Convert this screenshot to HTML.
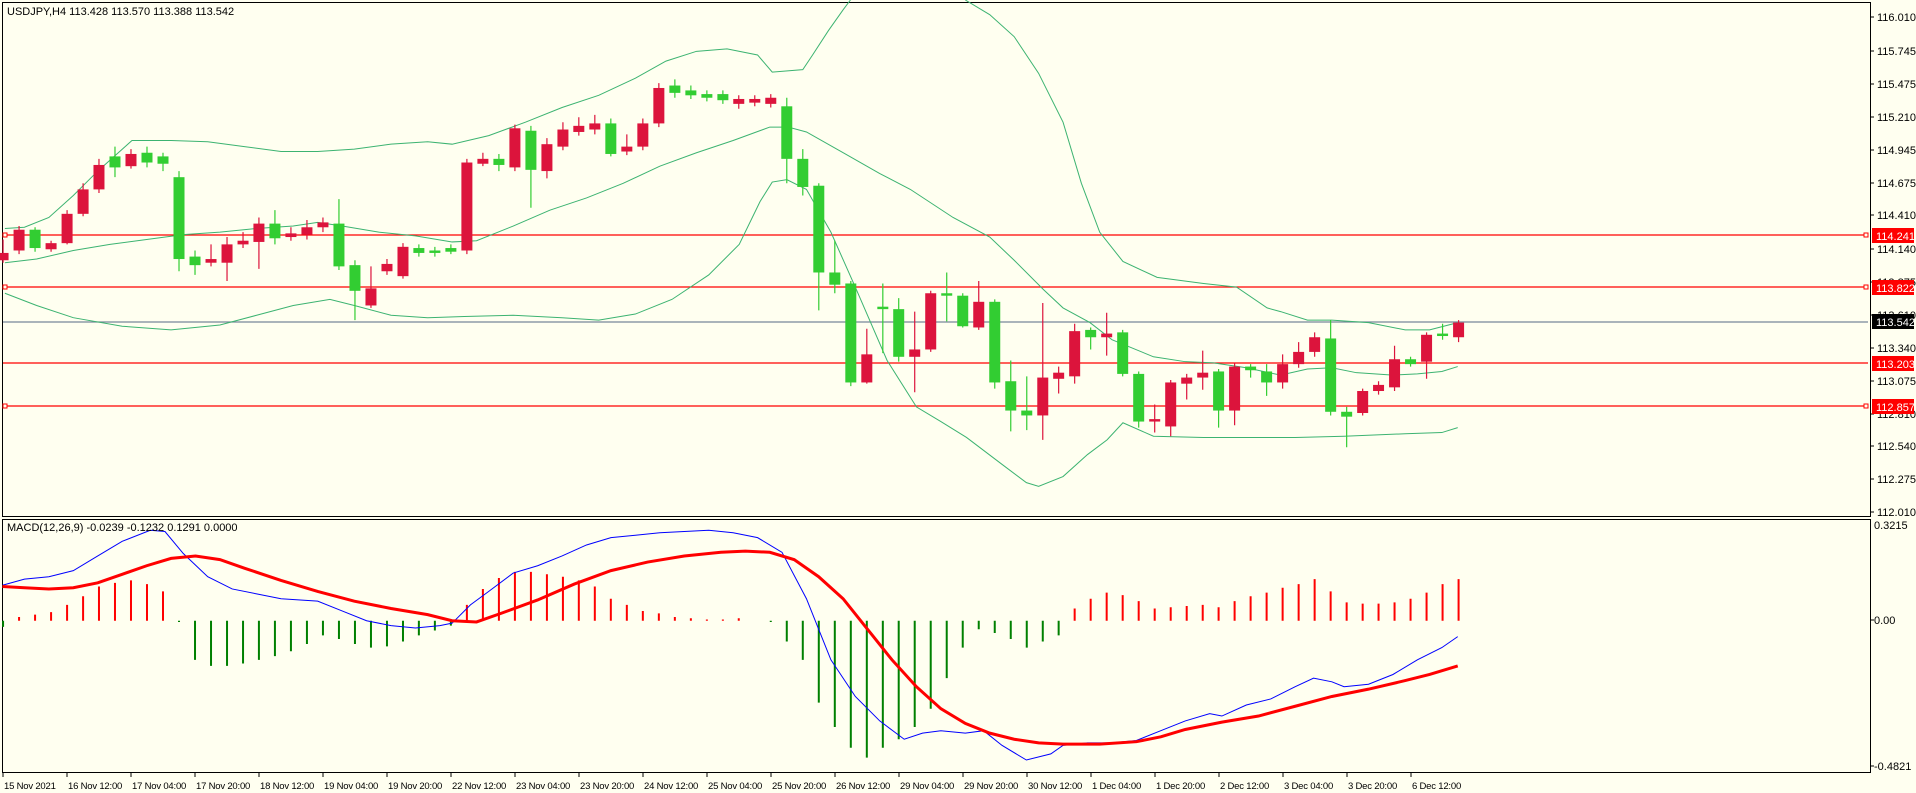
<!DOCTYPE html>
<html><head><meta charset="utf-8"><style>
html,body{margin:0;padding:0;background:#FFFFF0;}
svg{display:block;font-family:"Liberation Sans",sans-serif;}
</style></head><body>
<svg width="1916" height="793" viewBox="0 0 1916 793" xmlns="http://www.w3.org/2000/svg">
<rect width="1916" height="793" fill="#FFFFF0"/>
<path d="M2.5 2.5H1870.5V516.5H2.5Z M2.5 519.5H1870.5V772.5H2.5Z" fill="none" stroke="#000" stroke-width="1"/>
<g stroke="#FF0000" stroke-width="1.3">
<path d="M3 235H1868M3 287H1868M3 363H1868M3 406H1868"/>
</g>
<path d="M3 322H1868" stroke="#778899" stroke-width="1.2"/>
<g fill="#FFFFF0" stroke="#FF0000" stroke-width="1">
<rect x="3" y="233" width="4" height="4"/><rect x="3" y="285" width="4" height="4"/><rect x="3" y="404" width="4" height="4"/>
<rect x="1864" y="233" width="4" height="4"/><rect x="1864" y="285" width="4" height="4"/><rect x="1864" y="404" width="4" height="4"/>
</g>

<g transform="scale(1.2219)">
<g fill="none" stroke="#3CB371" stroke-width="1" vector-effect="non-scaling-stroke">
<polyline vector-effect="non-scaling-stroke" points="4,187 20,186 40,178 60,160 80,140 108,115 140,115 170,116 200,120 230,124 260,124 290,122 320,118 350,116 370,118 400,111 430,100 460,88 490,78 520,64 545,50 570,42 595,40 620,45 632,59 657,57 665,45 678,25 690,8 696,0"/>
<polyline vector-effect="non-scaling-stroke" points="790,0 810,12 830,30 850,60 870,100 885,150 900,190 919,214 947,227 985,232 1012,235 1037,252 1048,255 1070,262 1090,262 1120,264 1150,270 1170,270 1193,264"/>
<polyline vector-effect="non-scaling-stroke" points="4,215 30,212 60,205 90,200 120,196 150,192 180,190 210,187 240,185 260,182 280,185 310,190 340,193 370,198 390,197 420,185 450,172 480,162 510,150 540,136 570,125 600,115 630,104 645,104 660,108 690,125 720,142 745,155 780,178 810,194 830,213 854,237 870,252 892,264 910,278 944,292 970,296 993,297 1020,301 1048,307 1070,302 1090,301 1110,305 1140,307 1160,306 1180,304 1193,300"/>
<polyline vector-effect="non-scaling-stroke" points="4,240 30,250 60,260 100,267 140,270 180,266 210,258 240,250 270,245 290,250 320,258 350,260 380,259 420,258 460,260 490,262 520,257 550,245 580,225 605,200 622,165 632,149 644,147 660,155 680,190 700,235 726,295 750,333 770,345 791,358 820,380 840,395 850,398 870,390 890,372 906,360 919,346 944,357 985,358 1037,358 1060,358 1100,357 1150,355 1180,354 1193,350"/>
</g>
<path fill="none" stroke="#DC143C" stroke-width="1.2" vector-effect="non-scaling-stroke" d="M2.5 196V215M15.6 185V208M41.8 197V206M54.9 172V200M68 150V177M81 130V158M107.2 122V138M172.7 200V218M185.8 194V230M198.9 190V203M211.9 178V220M238.1 186V197M251.2 180V196M264.3 178V190M303.6 218V252M316.7 212V225M329.8 199V228M382.1 130V208M395.2 125V136M421.4 102V140M447.6 113V146M460.7 100V123M473.7 96V111M486.8 94V110M513 110V127M526.1 97V123M539.2 68V104M604.6 78V89M617.7 78V87M630.8 77V88M709.4 269V314M748.6 255V321M761.7 238V288M801 230V270M853.4 248V360M866.4 300V322M879.5 265V314M905.7 256V291M945 331V354M958.1 311V357M971.2 306V327M984.3 287V319M1010.4 297V348M1049.7 290V318M1062.8 280V301M1075.9 272V292M1115.2 318V340M1128.2 312V323M1141.3 283V320M1167.5 272V310M1193.7 262V280"/>
<g fill="#DC143C">
<rect x="-2" y="207" width="9" height="6"/><rect x="11.1" y="188" width="9" height="17"/><rect x="37.3" y="199" width="9" height="5"/><rect x="50.4" y="175" width="9" height="24"/><rect x="63.5" y="155" width="9" height="20"/><rect x="76.5" y="135" width="9" height="20"/><rect x="102.7" y="126" width="9" height="10"/><rect x="168.2" y="212" width="9" height="3"/><rect x="181.3" y="200" width="9" height="15"/><rect x="194.4" y="197" width="9" height="3"/><rect x="207.4" y="183" width="9" height="15"/><rect x="233.6" y="191" width="9" height="3"/><rect x="246.7" y="186" width="9" height="6"/><rect x="259.8" y="182" width="9" height="4"/><rect x="299.1" y="236" width="9" height="14"/><rect x="312.2" y="216" width="9" height="6"/><rect x="325.3" y="202" width="9" height="24"/><rect x="377.6" y="133" width="9" height="72"/><rect x="390.7" y="130" width="9" height="4"/><rect x="416.9" y="105" width="9" height="32"/><rect x="443.1" y="118" width="9" height="22"/><rect x="456.2" y="106" width="9" height="14"/><rect x="469.2" y="103" width="9" height="5"/><rect x="482.3" y="101" width="9" height="5"/><rect x="508.5" y="120" width="9" height="4"/><rect x="521.6" y="101" width="9" height="19"/><rect x="534.7" y="72" width="9" height="29"/><rect x="600.1" y="81" width="9" height="4"/><rect x="613.2" y="81" width="9" height="3"/><rect x="626.3" y="80" width="9" height="5"/><rect x="704.9" y="290" width="9" height="23"/><rect x="744.1" y="286" width="9" height="6"/><rect x="757.2" y="240" width="9" height="46"/><rect x="796.5" y="247" width="9" height="21"/><rect x="848.9" y="309" width="9" height="31"/><rect x="861.9" y="305" width="9" height="5"/><rect x="875" y="271" width="9" height="37"/><rect x="901.2" y="273" width="9" height="3"/><rect x="940.5" y="343" width="9" height="2"/><rect x="953.6" y="313" width="9" height="36"/><rect x="966.7" y="309" width="9" height="5"/><rect x="979.8" y="305" width="9" height="4"/><rect x="1005.9" y="300" width="9" height="36"/><rect x="1045.2" y="298" width="9" height="15"/><rect x="1058.3" y="288" width="9" height="10"/><rect x="1071.4" y="276" width="9" height="12"/><rect x="1110.7" y="320" width="9" height="18"/><rect x="1123.7" y="315" width="9" height="5"/><rect x="1136.8" y="294" width="9" height="23"/><rect x="1163" y="274" width="9" height="22"/><rect x="1189.2" y="264" width="9" height="12"/>
</g>
<path fill="none" stroke="#32CD32" stroke-width="1.2" vector-effect="non-scaling-stroke" d="M28.7 186V206M94.1 120V145M120.3 120V137M133.4 125V140M146.5 140V222M159.6 205V225M225 172V200M277.4 163V221M290.5 213V262M342.8 200V210M355.9 202V210M369 200V208M408.3 126V140M434.5 103V170M499.9 97V128M552.3 65V80M565.4 70V81M578.5 74V83M591.6 74V85M643.9 80V150M657 122V160M670.1 150V254M683.2 197V240M696.3 230V316M722.5 232V289M735.5 244V296M774.8 223V263M787.9 240V268M814.1 245V318M827.2 295V353M840.3 308V352M892.6 268V286M918.8 270V308M931.9 304V350M997.3 302V350M1023.5 298V309M1036.6 298V324M1089 262V340M1102.1 333V366M1154.4 292V300M1180.6 265V278"/>
<g fill="#32CD32">
<rect x="24.2" y="188" width="9" height="15"/><rect x="89.6" y="128" width="9" height="9"/><rect x="115.8" y="125" width="9" height="8"/><rect x="128.9" y="128" width="9" height="6"/><rect x="142" y="145" width="9" height="67"/><rect x="155.1" y="210" width="9" height="7"/><rect x="220.5" y="183" width="9" height="12"/><rect x="272.9" y="183" width="9" height="35"/><rect x="286" y="217" width="9" height="21"/><rect x="338.3" y="203" width="9" height="4"/><rect x="351.4" y="205" width="9" height="2"/><rect x="364.5" y="203" width="9" height="3"/><rect x="403.8" y="130" width="9" height="5"/><rect x="430" y="107" width="9" height="32"/><rect x="495.4" y="101" width="9" height="25"/><rect x="547.8" y="70" width="9" height="6"/><rect x="560.9" y="74" width="9" height="4"/><rect x="574" y="77" width="9" height="3"/><rect x="587.1" y="77" width="9" height="5"/><rect x="639.4" y="87" width="9" height="43"/><rect x="652.5" y="130" width="9" height="23"/><rect x="665.6" y="152" width="9" height="71"/><rect x="678.7" y="223" width="9" height="10"/><rect x="691.8" y="232" width="9" height="81"/><rect x="718" y="251" width="9" height="2"/><rect x="731" y="253" width="9" height="39"/><rect x="770.3" y="240" width="9" height="2"/><rect x="783.4" y="242" width="9" height="25"/><rect x="809.6" y="247" width="9" height="66"/><rect x="822.7" y="312" width="9" height="24"/><rect x="835.8" y="336" width="9" height="4"/><rect x="888.1" y="270" width="9" height="6"/><rect x="914.3" y="272" width="9" height="34"/><rect x="927.4" y="306" width="9" height="39"/><rect x="992.8" y="304" width="9" height="32"/><rect x="1019" y="300" width="9" height="3"/><rect x="1032.1" y="304" width="9" height="9"/><rect x="1084.5" y="277" width="9" height="60"/><rect x="1097.6" y="337" width="9" height="4"/><rect x="1149.9" y="294" width="9" height="4"/><rect x="1176.1" y="273" width="9" height="2"/>
</g>

<path fill="none" stroke="#FF0000" stroke-width="2" vector-effect="non-scaling-stroke" d="M15.6 508V505M28.7 508V503M41.8 508V501M54.9 508V495M68 508V488M81 508V480M94.1 508V477M107.2 508V475M120.3 508V478M133.4 508V484M382.1 508V495M395.2 508V482M408.3 508V473M421.4 508V468M434.5 508V468M447.6 508V470M460.7 508V472M473.7 508V475M486.8 508V480M499.9 508V490M513 508V495M526.1 508V500M539.2 508V502M552.3 508V505M565.4 508V506M578.5 508V507M591.6 508V507M604.6 508V506M879.5 508V498M892.6 508V490M905.7 508V485M918.8 508V487M931.9 508V492M945 508V498M958.1 508V497M971.2 508V496M984.3 508V495M997.3 508V497M1010.4 508V492M1023.5 508V488M1036.6 508V485M1049.7 508V481M1062.8 508V478M1075.9 508V474M1089 508V484M1102.1 508V493M1115.2 508V494M1128.2 508V494M1141.3 508V493M1154.4 508V490M1167.5 508V485M1180.6 508V478M1193.7 508V474"/>
<path fill="none" stroke="#008000" stroke-width="2" vector-effect="non-scaling-stroke" d="M2.5 508V513M146.5 508V509M159.6 508V540M172.7 508V545M185.8 508V545M198.9 508V543M211.9 508V540M225 508V537M238.1 508V533M251.2 508V527M264.3 508V520M277.4 508V523M290.5 508V527M303.6 508V530M316.7 508V529M329.8 508V525M342.8 508V520M355.9 508V516M369 508V512M630.8 508V509M643.9 508V525M657 508V540M670.1 508V575M683.2 508V595M696.3 508V612M709.4 508V620M722.5 508V612M735.5 508V605M748.6 508V595M761.7 508V580M774.8 508V555M787.9 508V530M801 508V515M814.1 508V518M827.2 508V523M840.3 508V530M853.4 508V525M866.4 508V520"/>
<polyline fill="none" stroke="#0000FF" stroke-width="1" vector-effect="non-scaling-stroke" points="2,479 20,474 40,472 60,467 80,455 100,443 123,434 135,435 150,453 170,472 190,482 210,486 230,490 260,492 280,500 300,508 320,512 340,514 360,512 370,510 385,495 400,484 420,469 440,463 460,455 480,446 500,440 520,438 540,436 560,435 580,434 600,436 620,440 640,452 660,490 680,540 700,570 720,590 740,605 755,600 770,598 790,600 805,598 820,610 840,622 860,617 870,610 890,608 910,608 930,606 950,598 970,590 990,584 1000,586 1020,577 1040,572 1060,562 1075,555 1090,558 1100,562 1120,560 1140,552 1160,540 1180,530 1193,521"/>
<polyline fill="none" stroke="#FF0000" stroke-width="3" vector-effect="non-scaling-stroke" points="2,480 20,481 40,482 60,481 80,477 100,470 120,463 140,457 160,455 180,458 200,465 230,475 260,484 290,492 320,498 350,503 370,508 390,509 410,502 440,491 470,478 500,467 530,460 560,455 590,452 610,451 630,452 650,458 670,472 690,490 710,515 730,540 750,562 770,580 790,592 810,600 830,605 850,608 870,609 900,609 930,607 950,603 970,597 1000,591 1030,586 1060,578 1090,570 1120,564 1150,557 1170,552 1193,545"/>
</g>

<path stroke="#000" stroke-width="1" d="M1870 17h4M1870 51h4M1870 84h4M1870 117h4M1870 150h4M1870 183h4M1870 215h4M1870 249h4M1870 282h4M1870 315h4M1870 348h4M1870 381h4M1870 414h4M1870 446h4M1870 479h4M1870 512h4M1870 620h4M1870 766h4"/>
<g font-size="11" fill="#000">
<text x="1877" y="21">116.010</text><text x="1877" y="55">115.745</text><text x="1877" y="88">115.475</text><text x="1877" y="121">115.210</text><text x="1877" y="154">114.945</text><text x="1877" y="187">114.675</text><text x="1877" y="219">114.410</text><text x="1877" y="253">114.140</text><text x="1877" y="286">113.875</text><text x="1877" y="319">113.610</text><text x="1877" y="352">113.340</text><text x="1877" y="385">113.075</text><text x="1877" y="418">112.810</text><text x="1877" y="450">112.540</text><text x="1877" y="483">112.275</text><text x="1877" y="516">112.010</text>
<text x="1874" y="529">0.3215</text><text x="1874" y="624">0.00</text><text x="1874" y="770">-0.4821</text>
</g>
<g fill="#FF0000"><rect x="1872" y="228" width="42" height="15"/><rect x="1872" y="280" width="42" height="15"/><rect x="1872" y="356" width="42" height="15"/><rect x="1872" y="399" width="42" height="15"/></g>
<rect x="1872" y="314" width="42" height="15" fill="#000"/>
<g font-size="11" fill="#fff">
<text x="1876" y="240">114.241</text><text x="1876" y="292">113.822</text><text x="1876" y="326">113.542</text><text x="1876" y="368">113.203</text><text x="1876" y="411">112.857</text>
</g>

<text x="7" y="15" font-size="11" fill="#000">USDJPY,H4  113.428 113.570 113.388 113.542</text>
<text x="7" y="531" font-size="11" fill="#000">MACD(12,26,9) -0.0239 -0.1232 0.1291 0.0000</text>

<path stroke="#000" stroke-width="1" d="M3 772v5M67 772v5M131 772v5M195 772v5M259 772v5M323 772v5M387 772v5M451 772v5M515 772v5M579 772v5M643 772v5M707 772v5M771 772v5M835 772v5M899 772v5M963 772v5M1027 772v5M1091 772v5M1155 772v5M1219 772v5M1283 772v5M1347 772v5M1411 772v5"/>
<g font-size="9.5" fill="#000" letter-spacing="-0.2">
<text x="4" y="789">15 Nov 2021</text><text x="68" y="789">16 Nov 12:00</text><text x="132" y="789">17 Nov 04:00</text><text x="196" y="789">17 Nov 20:00</text><text x="260" y="789">18 Nov 12:00</text><text x="324" y="789">19 Nov 04:00</text><text x="388" y="789">19 Nov 20:00</text><text x="452" y="789">22 Nov 12:00</text><text x="516" y="789">23 Nov 04:00</text><text x="580" y="789">23 Nov 20:00</text><text x="644" y="789">24 Nov 12:00</text><text x="708" y="789">25 Nov 04:00</text><text x="772" y="789">25 Nov 20:00</text><text x="836" y="789">26 Nov 12:00</text><text x="900" y="789">29 Nov 04:00</text><text x="964" y="789">29 Nov 20:00</text><text x="1028" y="789">30 Nov 12:00</text><text x="1092" y="789">1 Dec 04:00</text><text x="1156" y="789">1 Dec 20:00</text><text x="1220" y="789">2 Dec 12:00</text><text x="1284" y="789">3 Dec 04:00</text><text x="1348" y="789">3 Dec 20:00</text><text x="1412" y="789">6 Dec 12:00</text>
</g>
</svg>
</body></html>
